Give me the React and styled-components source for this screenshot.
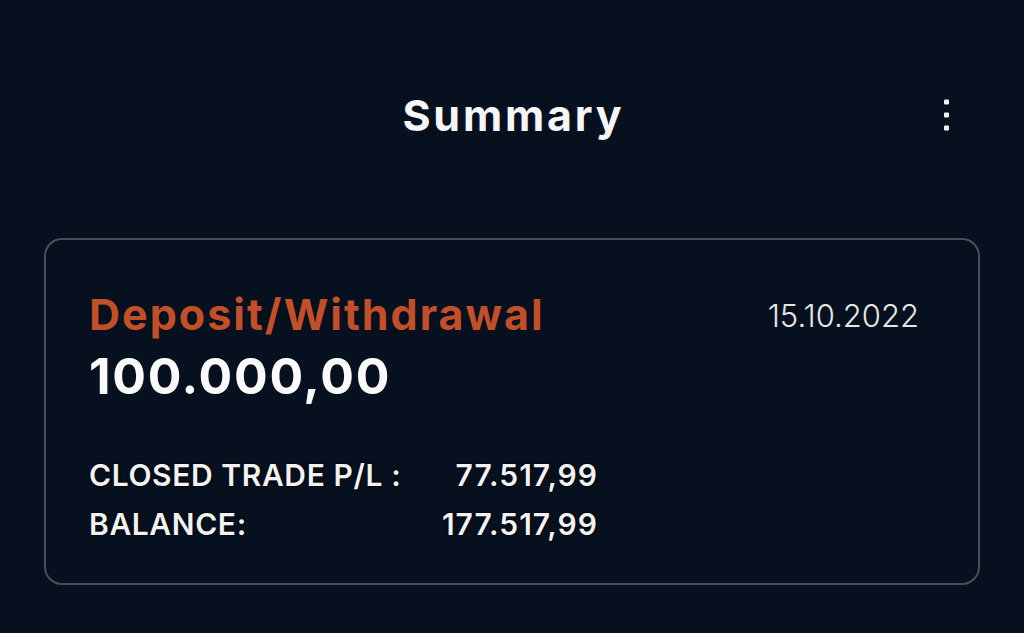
import React from "react";
import styled, { createGlobalStyle } from "styled-components";

const GlobalStyle = createGlobalStyle`
  html, body {
    margin: 0;
    padding: 0;
    background: #07101f;
  }
  body {
    font-family: Inter, "Noto Sans", sans-serif;
    color: #f4f4f4;
  }
`;

const summary = {
  title: "Deposit/Withdrawal",
  amount: "100.000,00",
  date: "15.10.2022",
  rows: [
    { label: "CLOSED TRADE P/L :", value: "77.517,99" },
    { label: "BALANCE:", value: "177.517,99" },
  ],
};

const App = () => {
  return (
    <>
      <GlobalStyle />
      <Page>
        <Header>
          <Title>Summary</Title>
          <MenuButton aria-label="menu">
            <Dot />
            <Dot />
            <Dot />
          </MenuButton>
        </Header>
        <Card>
          <CardTop>
            <div>
              <CardTitle>{summary.title}</CardTitle>
              <Amount>{summary.amount}</Amount>
            </div>
            <DateText>{summary.date}</DateText>
          </CardTop>
          <Stats>
            {summary.rows.map((row) => (
              <React.Fragment key={row.label}>
                <StatLabel>{row.label}</StatLabel>
                <StatValue>{row.value}</StatValue>
              </React.Fragment>
            ))}
          </Stats>
        </Card>
      </Page>
    </>
  );
};

export default App;

const Page = styled.div`
  width: 1024px;
  height: 633px;
  box-sizing: border-box;
  padding: 75px 44px 0 44px;
  background: #07101f;
  display: flex;
  flex-direction: column;
  gap: 83px;
`;

const Header = styled.div`
  position: relative;
  height: 80px;
  display: flex;
  align-items: center;
  justify-content: center;
`;

const Title = styled.h1`
  margin: 0;
  font-size: 43px;
  font-weight: 700;
  color: #f6f6f6;
  letter-spacing: 2.8px;
  margin-right: -2.8px;
`;

const MenuButton = styled.button`
  position: absolute;
  right: 31px;
  top: 50%;
  transform: translateY(-50%);
  background: none;
  border: none;
  padding: 0;
  display: flex;
  flex-direction: column;
  gap: 8px;
  cursor: pointer;
`;

const Dot = styled.span`
  display: block;
  width: 5px;
  height: 5px;
  border-radius: 1px;
  background: #f2f2f2;
`;

const Card = styled.div`
  height: 347px;
  box-sizing: border-box;
  border: 2px solid #4a4f57;
  border-radius: 18px;
  padding: 50px 59px 0 43px;
  display: flex;
  flex-direction: column;
`;

const CardTop = styled.div`
  display: flex;
  justify-content: space-between;
  align-items: flex-start;
`;

const CardTitle = styled.div`
  font-size: 43px;
  font-weight: 700;
  color: #c24f27;
  line-height: 48px;
  letter-spacing: 2px;
`;

const Amount = styled.div`
  margin-top: 10px;
  font-size: 50px;
  font-weight: 700;
  color: #fafafa;
  line-height: 56px;
  letter-spacing: 1.7px;
`;

const DateText = styled.div`
  margin-top: 6px;
  font-size: 31px;
  font-weight: 300;
  color: #e6e6e6;
  line-height: 40px;
`;

const Stats = styled.div`
  margin-top: 54px;
  width: 508px;
  display: grid;
  grid-template-columns: 1fr auto;
  row-gap: 15px;
`;

const StatLabel = styled.div`
  font-size: 30px;
  font-weight: 600;
  color: #f2f2f2;
  line-height: 34px;
  letter-spacing: 0.6px;
  text-shadow: 0 0 2px #000, 0 0 2px #000;
`;

const StatValue = styled.div`
  font-size: 30px;
  font-weight: 600;
  color: #f2f2f2;
  line-height: 34px;
  text-align: right;
  letter-spacing: 1px;
  margin-right: -1px;
  text-shadow: 0 0 2px #000, 0 0 2px #000;
`;
